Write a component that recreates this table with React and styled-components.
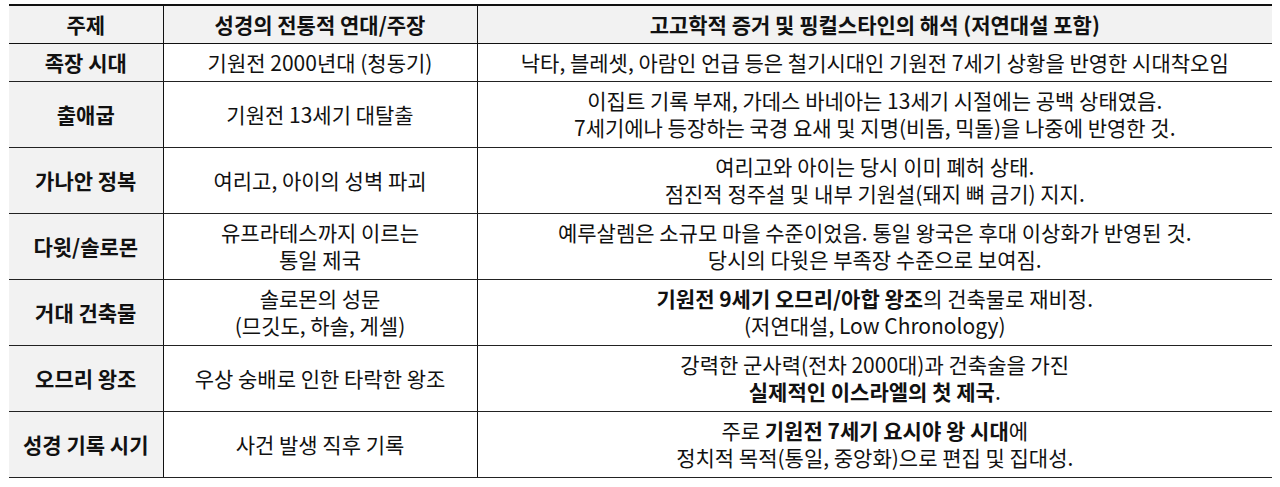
import React from "react";
import styled, { createGlobalStyle } from "styled-components";

const GlobalStyle = createGlobalStyle`
  html, body {
    margin: 0;
    padding: 0;
    background: #ffffff;
  }
  body {
    font-family: "Noto Sans CJK KR", "Noto Sans", sans-serif;
    color: #111;
  }
`;

const rows = [
  {
    topic: "족장 시대",
    bible: ["기원전 2000년대 (청동기)"],
    finkel: [["낙타, 블레셋, 아람인 언급 등은 철기시대인 기원전 7세기 상황을 반영한 시대착오임"]],
  },
  {
    topic: "출애굽",
    bible: ["기원전 13세기 대탈출"],
    finkel: [
      ["이집트 기록 부재, 가데스 바네아는 13세기 시절에는 공백 상태였음."],
      ["7세기에나 등장하는 국경 요새 및 지명(비돔, 믹돌)을 나중에 반영한 것."],
    ],
  },
  {
    topic: "가나안 정복",
    bible: ["여리고, 아이의 성벽 파괴"],
    finkel: [
      ["여리고와 아이는 당시 이미 폐허 상태."],
      ["점진적 정주설 및 내부 기원설(돼지 뼈 금기) 지지."],
    ],
  },
  {
    topic: "다윗/솔로몬",
    bible: ["유프라테스까지 이르는", "통일 제국"],
    finkel: [
      ["예루살렘은 소규모 마을 수준이었음. 통일 왕국은 후대 이상화가 반영된 것."],
      ["당시의 다윗은 부족장 수준으로 보여짐."],
    ],
  },
  {
    topic: "거대 건축물",
    bible: ["솔로몬의 성문", "(므깃도, 하솔, 게셀)"],
    finkel: [
      [{ b: "기원전 9세기 오므리/아합 왕조" }, "의 건축물로 재비정."],
      ["(저연대설, Low Chronology)"],
    ],
  },
  {
    topic: "오므리 왕조",
    bible: ["우상 숭배로 인한 타락한 왕조"],
    finkel: [
      ["강력한 군사력(전차 2000대)과 건축술을 가진"],
      [{ b: "실제적인 이스라엘의 첫 제국" }, "."],
    ],
  },
  {
    topic: "성경 기록 시기",
    bible: ["사건 발생 직후 기록"],
    finkel: [
      ["주로 ", { b: "기원전 7세기 요시야 왕 시대" }, "에"],
      ["정치적 목적(통일, 중앙화)으로 편집 및 집대성."],
    ],
  },
];

const Page = styled.div`
  padding: 4px 8px 0 9px;
`;

const Table = styled.table`
  width: 1263px;
  border-collapse: collapse;
  table-layout: fixed;
  font-size: 21px;
  line-height: 27px;
`;

const HeadRow = styled.tr`
  height: 38px;
  background: #f2f2f2;
`;

const BodyRow = styled.tr`
  height: ${(p) => (p.$tall ? "66px" : "38px")};
`;

const HeadCell = styled.th`
  padding: 0;
  font-weight: 700;
  text-align: center;
  vertical-align: middle;
  border-top: 2px solid #111;
  border-bottom: 1.5px solid #111;
  border-left: ${(p) => (p.$first ? "none" : "1.5px solid #111")};
`;

const Cell = styled.td`
  padding: 0;
  text-align: center;
  vertical-align: middle;
  border-bottom: 1.5px solid #222;
  border-left: ${(p) => (p.$first ? "none" : "1.5px solid #111")};
  background: ${(p) => (p.$topic ? "#f2f2f2" : "#ffffff")};
  font-weight: ${(p) => (p.$topic ? 700 : 400)};
`;

const Line = styled.div`
  white-space: nowrap;
`;

const Strong = styled.b`
  font-weight: 700;
`;

const renderLine = (parts, i) => (
  <Line key={i}>
    {parts.map((p, j) =>
      typeof p === "string" ? <React.Fragment key={j}>{p}</React.Fragment> : <Strong key={j}>{p.b}</Strong>
    )}
  </Line>
);

export default function App() {
  return (
    <Page>
      <GlobalStyle />
      <Table>
        <colgroup>
          <col style={{ width: 154 }} />
          <col style={{ width: 314 }} />
          <col style={{ width: 795 }} />
        </colgroup>
        <thead>
          <HeadRow>
            <HeadCell $first>주제</HeadCell>
            <HeadCell>성경의 전통적 연대/주장</HeadCell>
            <HeadCell>고고학적 증거 및 핑컬스타인의 해석 (저연대설 포함)</HeadCell>
          </HeadRow>
        </thead>
        <tbody>
          {rows.map((r) => (
            <BodyRow key={r.topic} $tall={r.finkel.length > 1 || r.bible.length > 1}>
              <Cell $first $topic>{r.topic}</Cell>
              <Cell>
                {r.bible.map((t, i) => (
                  <Line key={i}>{t}</Line>
                ))}
              </Cell>
              <Cell>{r.finkel.map(renderLine)}</Cell>
            </BodyRow>
          ))}
        </tbody>
      </Table>
    </Page>
  );
}
